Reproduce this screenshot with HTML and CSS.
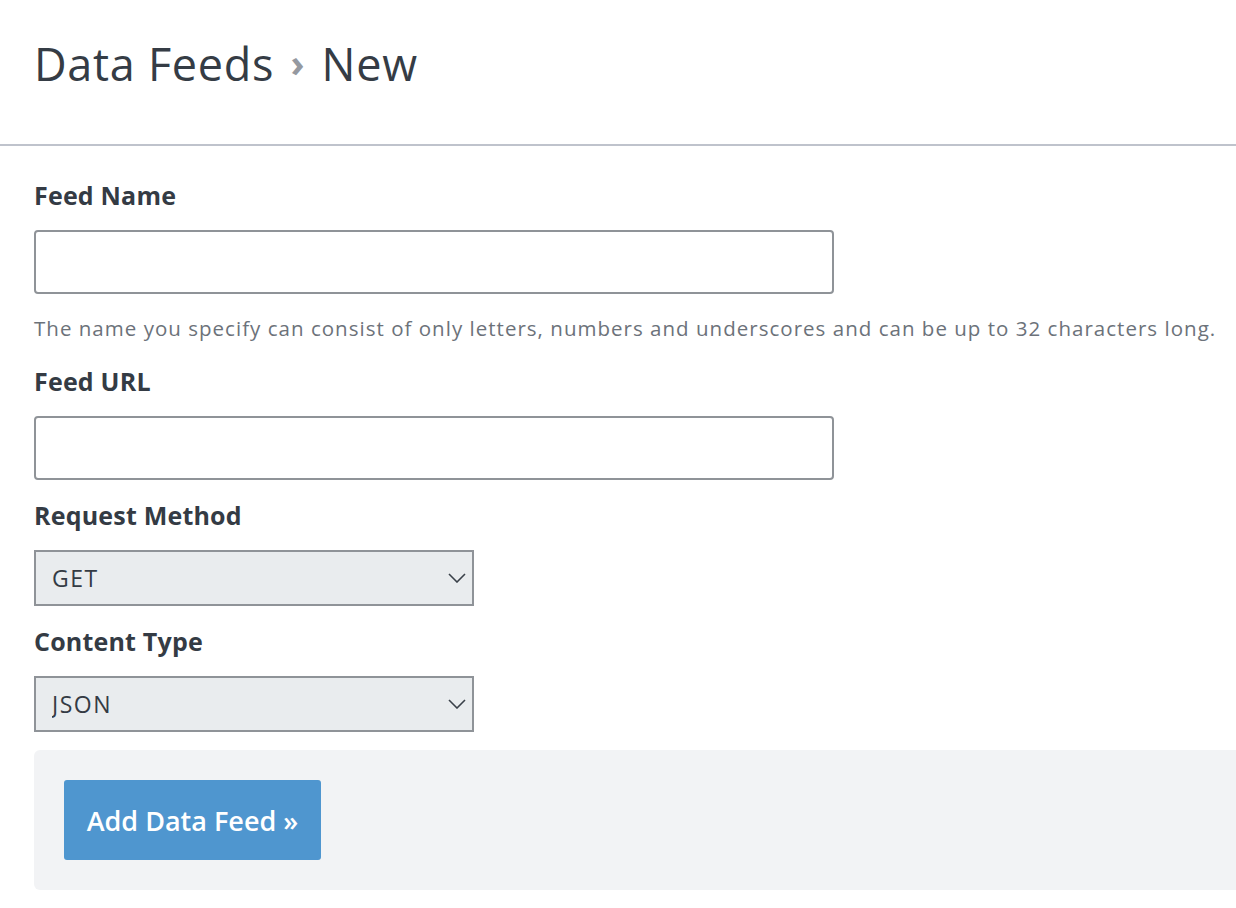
FILE: index.html
```html
<!DOCTYPE html>
<html lang="en">
<head>
    <meta charset="UTF-8">
    <meta name="viewport" content="width=device-width, initial-scale=1.0">
    <title>Data Feeds - New</title>
    <link rel="stylesheet" href="styles.css">
</head>
<body>
    <header class="page-header">
        <h1>Data Feeds <span class="crumb-sep">›</span> New</h1>
    </header>

    <form class="feed-form">
        <div class="form-group">
            <label for="feed-name">Feed Name</label>
            <input type="text" id="feed-name" class="text-input">
            <p class="help-text">The name you specify can consist of only letters, numbers and underscores and can be up to 32 characters long.</p>
        </div>
        <div class="form-group">
            <label for="feed-url">Feed URL</label>
            <input type="text" id="feed-url" class="text-input">
        </div>
        <div class="form-group">
            <label for="request-method">Request Method</label>
            <div class="select-wrap">
                <select id="request-method">
                    <option>GET</option>
                    <option>POST</option>
                </select>
                <svg class="chevron" width="18" height="10" viewBox="0 0 18 10"><path d="M1 1l8 8 8-8" fill="none" stroke="#3a4149" stroke-width="1.6"/></svg>
            </div>
        </div>
        <div class="form-group">
            <label for="content-type">Content Type</label>
            <div class="select-wrap">
                <select id="content-type">
                    <option>JSON</option>
                    <option>XML</option>
                </select>
                <svg class="chevron" width="18" height="10" viewBox="0 0 18 10"><path d="M1 1l8 8 8-8" fill="none" stroke="#3a4149" stroke-width="1.6"/></svg>
            </div>
        </div>
        <div class="form-actions">
            <button type="submit">Add Data Feed »</button>
        </div>
    </form>
</body>
</html>
```

FILE: styles.css
```css
body {
    font-family: 'Open Sans', 'Lato', sans-serif;
    margin: 0;
    color: #343b44;
    background: #fff;
}
.page-header {
    border-bottom: 2px solid #bfc3cc;
    padding: 36px 34px 0;
    height: 146px;
    box-sizing: border-box;
}
.page-header h1 {
    margin: 0;
    font-size: 45px;
    font-weight: 400;
    letter-spacing: 0.7px;
    line-height: 56px;
    color: #353c45;
}
.crumb-sep {
    color: #9599a0;
    font-weight: 700;
    font-size: 38px;
    position: relative;
    top: -4px;
    margin: 0 4px;
}
.feed-form {
    padding: 34px 0 18px 34px;
}
.form-group {
    margin-bottom: 20px;
}
.form-group label {
    display: block;
    font-size: 25px;
    font-weight: 700;
    letter-spacing: 0.2px;
    line-height: 30px;
    margin-bottom: 20px;
}
.text-input {
    display: block;
    width: 800px;
    height: 64px;
    box-sizing: border-box;
    border: 2px solid #8f9398;
    border-radius: 4px;
    padding: 0 16px;
    font: inherit;
    font-size: 20px;
}
.help-text {
    margin: 20px 0 24px;
    font-size: 20.5px;
    letter-spacing: 1.02px;
    color: #6c727a;
    line-height: 28px;
    white-space: nowrap;
}
.select-wrap {
    position: relative;
    width: 440px;
}
.select-wrap select {
    display: block;
    width: 440px;
    height: 56px;
    box-sizing: border-box;
    appearance: none;
    -webkit-appearance: none;
    background: #e9ecee;
    border: 2px solid #8f9398;
    border-radius: 0;
    padding: 0 16px;
    font: inherit;
    font-size: 23px;
    letter-spacing: 1.5px;
    color: #343b44;
}
.chevron {
    position: absolute;
    right: 8px;
    top: 23px;
    pointer-events: none;
}
.form-actions {
    background: #f2f3f5;
    border-radius: 6px 0 0 6px;
    padding: 30px;
    margin-top: -2px;
}
button {
    background-color: #4f96cf;
    color: #fff;
    border: none;
    border-radius: 3px;
    width: 257px;
    height: 80px;
    font: inherit;
    font-size: 27px;
    font-weight: 600;
    cursor: pointer;
}
```
